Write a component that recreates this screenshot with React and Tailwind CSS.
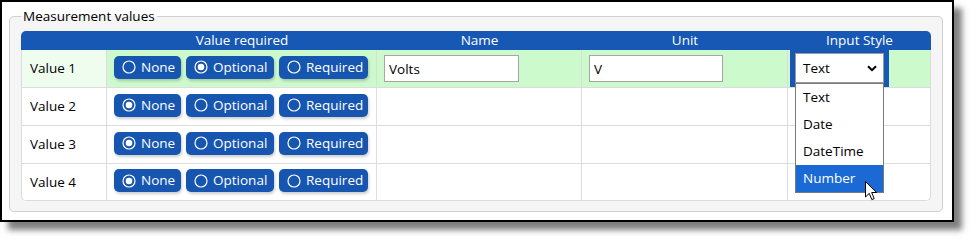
import { useState } from "react"

const FONT = { fontFamily: '"Open Sans", "Noto Sans", sans-serif' }

const LEVELS = ["None", "Optional", "Required"]

function Radio({ checked }) {
  return (
    <svg width="14" height="14" viewBox="0 0 14 14" className="shrink-0">
      <circle cx="7" cy="7" r="6" fill="none" stroke="white" strokeWidth="1.2" />
      {checked && <circle cx="7" cy="7" r="3.3" fill="white" />}
    </svg>
  )
}

function LevelButtons({ value }) {
  const widths = { None: "w-[67px]", Optional: "w-[88px]", Required: "w-[89px]" }
  return (
    <div className="flex gap-[5px] pl-[7px] pb-[3px]">
      {LEVELS.map((l) => (
        <button
          key={l}
          className={`${widths[l]} h-[23px] flex items-center gap-[5px] pl-[8px] rounded-[5px] bg-[#1656b1] text-white text-[13.5px] shadow-[1px_2px_3px_rgba(0,0,0,0.2)]`}
        >
          <Radio checked={value === l} />
          <span>{l}</span>
        </button>
      ))}
    </div>
  )
}

function Cursor() {
  return (
    <svg
      width="13"
      height="20"
      viewBox="0 0 13 20"
      className="absolute left-[69px] top-[97px] z-30"
    >
      <path
        d="M0.5 0.5 L0.5 16 L4.3 12.4 L6.8 18.6 L9.2 17.6 L6.7 11.5 L11.6 11.5 Z"
        fill="white"
        stroke="black"
        strokeWidth="1"
        strokeLinejoin="round"
      />
    </svg>
  )
}

function Row({ label, value, first, last }) {
  const bg = first ? "bg-[#cdfacd]" : "bg-white"
  const cell = `border-r border-b border-[#dcdcdc] ${bg} ${last ? "h-[37px]" : "h-[38px]"} flex items-center`
  return (
    <>
      <div
        className={`border-l border-r border-b border-[#dcdcdc] ${first ? "bg-[#effdef]" : "bg-white"} ${last ? "h-[37px] rounded-bl-[5px]" : "h-[38px]"} flex items-center pl-[8px] text-[13.5px] text-black`}
      >
        {label}
      </div>
      <div className={cell}>
        <LevelButtons value={value} />
      </div>
      <div className={`${cell} pl-[7px]`}>
        {first && (
          <input
            defaultValue="Volts"
            className="w-[135px] h-[27px] border border-[#a6a6a6] bg-white px-[4px] text-[13.5px] text-black outline-none"
          />
        )}
      </div>
      <div className={`${cell} pl-[7px]`}>
        {first && (
          <input
            defaultValue="V"
            className="w-[134px] h-[27px] border border-[#a6a6a6] bg-white px-[4px] text-[13.5px] text-black outline-none"
          />
        )}
      </div>
      <div className={`${cell} ${last ? "rounded-br-[5px]" : ""} pl-[7px] relative`}>
        {first && <StyleSelect />}
      </div>
    </>
  )
}

function StyleSelect() {
  const [hover] = useState("Number")
  const options = ["Text", "Date", "DateTime", "Number"]
  return (
    <div className="relative z-20 pb-[1px]">
      <div className="w-[89px] h-[30px] border border-[#9a9a9a] bg-white flex items-center justify-between pl-[7px] pr-[6px] text-[13.5px] text-black shadow-[1px_0_0_4px_#1658b3,-1px_0_0_4px_#1658b3]">
        <span>Text</span>
        <svg width="10" height="7" viewBox="0 0 10 7">
          <path d="M1 1.2 L5 5.2 L9 1.2" fill="none" stroke="black" strokeWidth="2" />
        </svg>
      </div>
      <div className="absolute left-0 top-[30px] w-[89px] border border-[#7a7a7a] bg-white text-[13.5px] text-black">
        {options.map((o) => (
          <div
            key={o}
            className={`h-[27px] flex items-center pl-[7px] ${o === hover ? "bg-[#1a69d5] text-white" : ""}`}
          >
            {o}
          </div>
        ))}
        <Cursor />
      </div>
    </div>
  )
}

export default function App() {
  const values = ["Optional", "None", "None", "None"]
  return (
    <div className="w-[974px] h-[242px] bg-white" style={FONT}>
      <div className="w-[954px] h-[222px] border-2 border-black bg-white shadow-[8px_8px_6px_rgba(0,0,0,0.5)]">
        <fieldset className="ml-[7px] mt-[5px] w-[934px] border border-[#cfcfcf] rounded-[5px] bg-[#f5f5f5] pl-[11px] pr-[10px] pt-[6px] pb-[10px]">
          <legend className="px-[2px] text-[13.5px] leading-[18px] text-black">Measurement values</legend>
          <div className="grid grid-cols-[86px_270px_205px_206px_143px]">
            <div className="h-[19px] bg-[#1658b3] rounded-tl-[5px]"></div>
            <div className="h-[19px] bg-[#1658b3] text-white text-[13.5px] flex items-center justify-center">Value required</div>
            <div className="h-[19px] bg-[#1658b3] text-white text-[13.5px] flex items-center justify-center">Name</div>
            <div className="h-[19px] bg-[#1658b3] text-white text-[13.5px] flex items-center justify-center">Unit</div>
            <div className="h-[19px] bg-[#1658b3] text-white text-[13.5px] flex items-center justify-center rounded-tr-[5px]">Input Style</div>
            {values.map((v, i) => (
              <Row key={i} label={`Value ${i + 1}`} value={v} first={i === 0} last={i === 3} />
            ))}
          </div>
        </fieldset>
      </div>
    </div>
  )
}
